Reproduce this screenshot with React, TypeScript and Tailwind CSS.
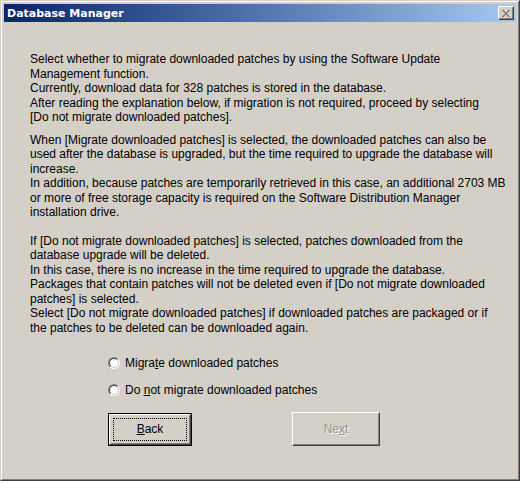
import React from 'react';

const font = { fontFamily: '"Liberation Sans", Arial, sans-serif' };

function Radio({ children }: { children: React.ReactNode }) {
  return (
    <label className="flex items-center gap-[5px] text-[12px] leading-[14px] text-black">
      <span className="w-[12px] h-[12px] rounded-full border border-t-[#808080] border-l-[#808080] border-r-white border-b-white">
        <span className="block w-full h-full rounded-full bg-white border border-t-[#404040] border-l-[#404040] border-r-[#d4d0c8] border-b-[#d4d0c8]" />
      </span>
      <span>{children}</span>
    </label>
  );
}

export default function App() {
  return (
    <div className="w-[520px] h-[483px] bg-white" style={font}>
      <div className="w-[520px] h-[481px] border border-t-[#d4d0c8] border-l-[#d4d0c8] border-r-[#404040] border-b-[#404040]">
        <div className="w-full h-full border border-t-white border-l-white border-r-[#808080] border-b-[#808080] bg-[#d4d0c8] p-[2px] flex flex-col">
          {/* title bar */}
          <div className="h-[18px] flex items-center justify-between pl-[3px] pr-[2px] bg-gradient-to-r from-[#0a246a] to-[#a6caf0]">
            <span
              className="text-white font-bold text-[11px] leading-none"
              style={{ fontFamily: '"DejaVu Sans", Verdana, sans-serif' }}
            >
              Database Manager
            </span>
            <span className="w-[16px] h-[14px] bg-[#d4d0c8] border border-t-white border-l-white border-r-[#404040] border-b-[#404040]">
              <span className="flex w-full h-full items-center justify-center border border-t-[#d4d0c8] border-l-[#d4d0c8] border-r-[#808080] border-b-[#808080]">
                <svg width="8" height="7" viewBox="0 0 8 7" shapeRendering="crispEdges">
                  <path d="M0 0h2v1h-2zM6 0h2v1h-2zM1 1h2v1h-2zM5 1h2v1h-2zM2 2h4v1h-4zM3 3h2v1h-2zM2 4h4v1h-4zM1 5h2v1h-2zM5 5h2v1h-2zM0 6h2v1h-2zM6 6h2v1h-2z" fill="#808080" />
                </svg>
              </span>
            </span>
          </div>

          {/* body */}
          <div className="flex-1 pt-[30px] pl-[26px] text-[12px] leading-[14.5px] text-black whitespace-nowrap">
            <p>
              Select whether to migrate downloaded patches by using the Software Update<br />
              Management function.<br />
              Currently, download data for 328 patches is stored in the database.<br />
              After reading the explanation below, if migration is not required, proceed by selecting<br />
              [Do not migrate downloaded patches].
            </p>
            <p className="mt-[8px]">
              When [Migrate downloaded patches] is selected, the downloaded patches can also be<br />
              used after the database is upgraded, but the time required to upgrade the database will<br />
              increase.<br />
              In addition, because patches are temporarily retrieved in this case, an additional 2703 MB<br />
              or more of free storage capacity is required on the Software Distribution Manager<br />
              installation drive.
            </p>
            <p className="mt-[14px]">
              If [Do not migrate downloaded patches] is selected, patches downloaded from the<br />
              database upgrade will be deleted.<br />
              In this case, there is no increase in the time required to upgrade the database.<br />
              Packages that contain patches will not be deleted even if [Do not migrate downloaded<br />
              patches] is selected.<br />
              Select [Do not migrate downloaded patches] if downloaded patches are packaged or if<br />
              the patches to be deleted can be downloaded again.
            </p>

            <div className="mt-[21px] ml-[78px] flex flex-col gap-[13px]">
              <Radio>
                Migra<u>t</u>e downloaded patches
              </Radio>
              <Radio>
                Do <u>n</u>ot migrate downloaded patches
              </Radio>
            </div>

            <div className="mt-[16px] ml-[78px] flex items-start gap-[100px]">
              <button className="w-[84px] h-[33px] border border-black bg-[#d4d0c8] p-0">
                <div className="w-full h-full border border-t-white border-l-white border-r-[#404040] border-b-[#404040]">
                  <div className="w-full h-full border border-t-[#d4d0c8] border-l-[#d4d0c8] border-r-[#808080] border-b-[#808080] p-[2px]">
                    <div className="w-full h-full border border-dotted border-black flex items-center justify-center text-[12px]">
                      <span><u>B</u>ack</span>
                    </div>
                  </div>
                </div>
              </button>
              <button className="w-[88px] h-[34px] -mt-[1px] bg-[#d4d0c8] p-0 border border-t-white border-l-white border-r-[#404040] border-b-[#404040]">
                <div className="w-full h-full flex items-center justify-center border border-t-[#d4d0c8] border-l-[#d4d0c8] border-r-[#808080] border-b-[#808080] text-[12px] text-[#8e8e8e] [text-shadow:1px_1px_0_#ffffff]">
                  <span>Ne<u>x</u>t</span>
                </div>
              </button>
            </div>
          </div>
        </div>
      </div>
    </div>
  );
}
